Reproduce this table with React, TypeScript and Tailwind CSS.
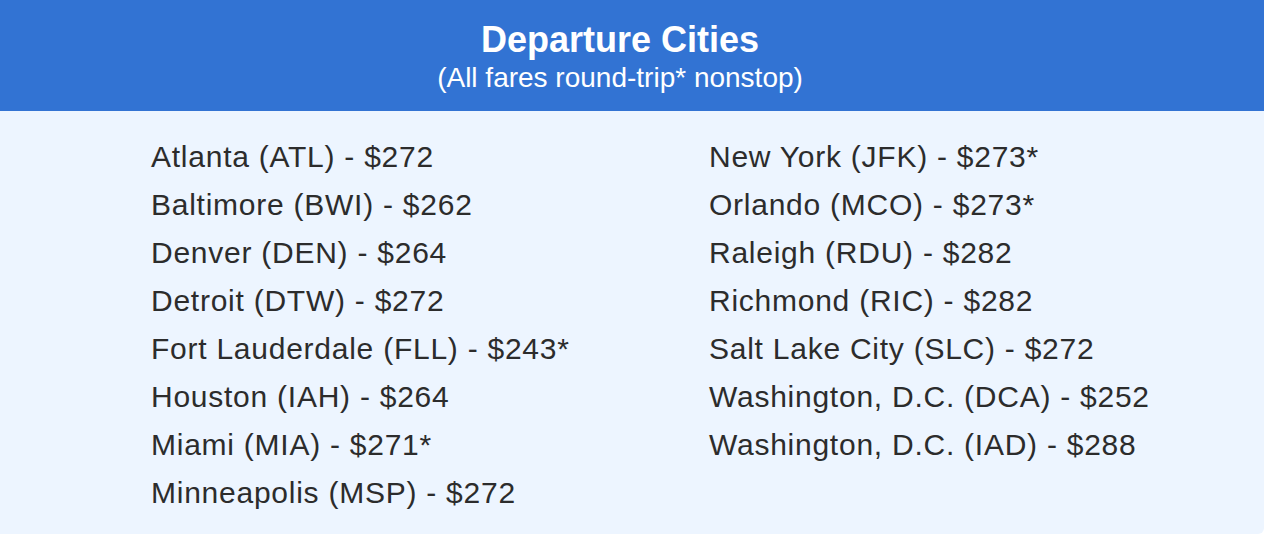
const LEFT = [
  "Atlanta (ATL) - $272",
  "Baltimore (BWI) - $262",
  "Denver (DEN) - $264",
  "Detroit (DTW) - $272",
  "Fort Lauderdale (FLL) - $243*",
  "Houston (IAH) - $264",
  "Miami (MIA) - $271*",
  "Minneapolis (MSP) - $272",
];

const RIGHT = [
  "New York (JFK) - $273*",
  "Orlando (MCO) - $273*",
  "Raleigh (RDU) - $282",
  "Richmond (RIC) - $282",
  "Salt Lake City (SLC) - $272",
  "Washington, D.C. (DCA) - $252",
  "Washington, D.C. (IAD) - $288",
];

function CityList({ cities }: { cities: string[] }) {
  return (
    <ul>
      {cities.map((city) => (
        <li key={city} className="text-[30px] leading-[48px] tracking-[0.75px] text-[#2c2c2c]">
          {city}
        </li>
      ))}
    </ul>
  );
}

export default function App() {
  return (
    <div className="h-[534px] w-[1264px] bg-white font-['Liberation_Sans',Arial,sans-serif]">
      <div className="flex h-full flex-col overflow-hidden rounded-br-md bg-[#edf5ff]">
        <header className="flex h-[111px] flex-col items-center bg-[#3273d3] pr-[24px] pt-[20px] text-white">
          <h1 className="text-[36px] font-bold leading-[40px]">Departure Cities</h1>
          <p className="text-[28px] leading-[36px]">(All fares round-trip* nonstop)</p>
        </header>
        <div className="grid grid-cols-[558px_1fr] pl-[151px] pt-[22px]">
          <CityList cities={LEFT} />
          <CityList cities={RIGHT} />
        </div>
      </div>
    </div>
  );
}
